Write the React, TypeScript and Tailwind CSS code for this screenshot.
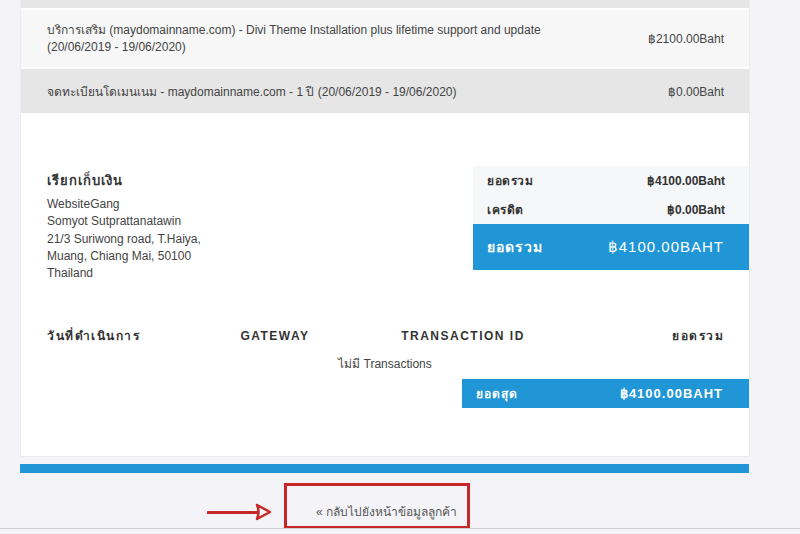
import React from 'react';

const items = [
  {
    desc: 'บริการเสริม (maydomainname.com) - Divi Theme Installation plus lifetime support and update (20/06/2019 - 19/06/2020)',
    amount: '฿2100.00Baht',
    tone: 'bg-[#f7f7f7] h-[59px]',
  },
  {
    desc: 'จดทะเบียนโดเมนเนม - maydomainname.com - 1 ปี (20/06/2019 - 19/06/2020)',
    amount: '฿0.00Baht',
    tone: 'bg-[#e6e6e6] h-[46px] pt-[2px]',
  },
];

const address = ['WebsiteGang', 'Somyot Sutprattanatawin', '21/3 Suriwong road, T.Haiya,', 'Muang, Chiang Mai, 50100', 'Thailand'];

const App = () => {
  return (
    <div className="relative h-[534px] w-full overflow-hidden bg-[#f4f4f8] font-['Liberation_Sans',Arial,sans-serif] text-[12px] text-[#444]">
      <div className="ml-[20px] w-[730px] border-x border-b border-[#ececf0] bg-white">
        <div className="h-[8px] bg-[#e6e6e6]" />
        {items.map((item) => (
          <div key={item.amount} className={`flex items-center justify-between border-t-2 border-white pl-[26px] pr-[25px] ${item.tone}`}>
            <p className="w-[520px] leading-[17px]">{item.desc}</p>
            <span>{item.amount}</span>
          </div>
        ))}

        <div className="mt-[53px] flex justify-between">
          <div className="pl-[26px]">
            <h3 className="mt-[5px] text-[13px] font-bold leading-[20px] tracking-[1px] text-[#333]">เรียกเก็บเงิน</h3>
            <div className="mt-[5px] leading-[17.3px]">
              {address.map((line) => (
                <div key={line}>{line}</div>
              ))}
            </div>
          </div>

          <div className="w-[276px]">
            <div className="flex h-[29px] items-center justify-between bg-[#f6f7f9] pl-[14px] pr-[24px] font-bold text-[#333]">
              <span className="tracking-[0.5px]">ยอดรวม</span>
              <span>฿4100.00Baht</span>
            </div>
            <div className="flex h-[29px] items-center justify-between bg-[#f6f7f9] pl-[14px] pr-[24px] font-bold text-[#333]">
              <span className="tracking-[0.5px]">เครดิต</span>
              <span>฿0.00Baht</span>
            </div>
            <div className="flex h-[46px] items-center justify-between bg-[#2196d6] pl-[14px] pr-[25px] text-white">
              <span className="text-[14px] font-bold tracking-[1px]">ยอดรวม</span>
              <span className="text-[15px] tracking-[1px]">฿4100.00BAHT</span>
            </div>
          </div>
        </div>

        <div className="mt-[44px] grid grid-cols-[160px_136px_240px_1fr] pl-[26px] pr-[25px] text-[12px] font-bold leading-[20px] tracking-[1.5px] text-[#333]">
          <span>วันที่ดำเนินการ</span>
          <span className="text-center">GATEWAY</span>
          <span className="text-center">TRANSACTION ID</span>
          <span className="text-right">ยอดรวม</span>
        </div>
        <p className="mt-[10px] text-center leading-[16px]">ไม่มี Transactions</p>

        <div className="mt-[7px] flex justify-end">
          <div className="flex h-[29px] w-[287px] items-center justify-between bg-[#2196d6] pl-[14px] pr-[26px] font-bold tracking-[1px] text-white">
            <span>ยอดสุด</span>
            <span className="text-[13px]">฿4100.00BAHT</span>
          </div>
        </div>
        <div className="h-[48px]" />
      </div>

      <div className="ml-[20px] mt-[7px] h-[9px] w-[729px] bg-[#2196d6]" />

      <div className="mt-[10px] flex items-end">
        <svg className="ml-[207px] mb-[7px]" width="66" height="20" viewBox="0 0 66 20" fill="none">
          <path d="M1 10.5 H50" stroke="#c62828" strokeWidth="3" strokeLinecap="round" />
          <path d="M50 3 L63 10 L50 17 Q53 10 50 3 Z" stroke="#c62828" strokeWidth="2.5" strokeLinejoin="round" />
        </svg>
        <div className="ml-[11px] flex h-[46px] w-[186px] items-end border-[3px] border-[#c62828] pb-[5px] pl-[29px] text-[#555]">
          « กลับไปยังหน้าข้อมูลลูกค้า
        </div>
      </div>
      <div className="absolute left-0 top-[528px] h-[1px] w-full bg-[#cfcfd4]" />
    </div>
  );
};

export default App;
